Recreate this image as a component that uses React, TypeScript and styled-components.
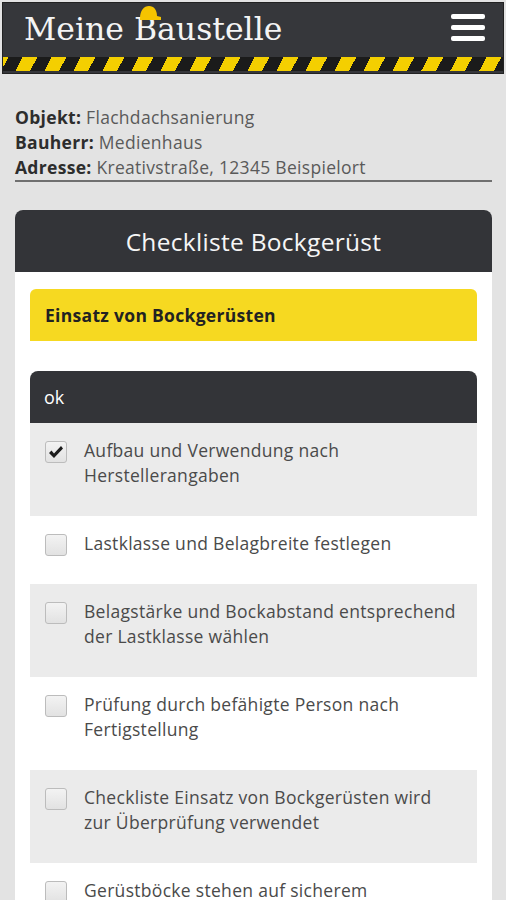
import React from 'react';
import styled, { createGlobalStyle } from 'styled-components';

const GlobalStyle = createGlobalStyle`
  body {
    margin: 0;
    background: #e3e3e3;
    font-family: 'Open Sans', 'Liberation Sans', sans-serif;
  }
`;

const Page = styled.div`
  width: 506px;
  min-height: 900px;
  overflow: hidden;
`;

const Header = styled.header`
  margin: 2px 2px 0;
  height: 72px;
  background: #36373b;
  border: 1px solid #222;
  box-sizing: border-box;
  display: flex;
  flex-direction: column;
`;

const HeaderBar = styled.div`
  flex: 1;
  display: flex;
  align-items: center;
  justify-content: space-between;
  padding: 0 18px 0 21px;
`;

const Logo = styled.div`
  position: relative;
  font-family: 'DejaVu Serif', 'Liberation Serif', serif;
  font-size: 31.5px;
  color: #f4f4f4;
  margin-top: -3px;
`;

const Hat = styled.svg`
  position: absolute;
  left: 114px;
  top: -7px;
`;

const Burger = styled.button`
  border: none;
  background: transparent;
  padding: 0;
  width: 34px;
  display: flex;
  flex-direction: column;
  gap: 6px;
  margin-top: -6px;
  cursor: pointer;
`;

const BurgerLine = styled.span`
  display: block;
  height: 5px;
  border-radius: 2px;
  background: #fff;
`;

const Stripe = styled.div`
  height: 14px;
  margin-bottom: 2px;
  background: repeating-linear-gradient(
    -62deg,
    #1b1b1b 0 8px,
    #f4cf00 8px 21px,
    #1b1b1b 21px 25.6px
  );
`;

const Info = styled.section`
  margin: 31px 14px 0 15px;
  border-bottom: 2px solid #707070;
  font-size: 17.5px;
  line-height: 25px;
  letter-spacing: 0.3px;
  color: #5a5a5a;
`;

const InfoRow = styled.div``;

const Label = styled.b`
  font-weight: 700;
  color: #2d2d2d;
`;

const Card = styled.section`
  margin: 28px 14px 0 15px;
  background: #fff;
  border-radius: 8px 8px 0 0;
`;

const CardTitle = styled.h1`
  margin: 0;
  height: 62px;
  display: flex;
  align-items: center;
  justify-content: center;
  background: #333438;
  border-radius: 8px 8px 0 0;
  color: #f6f6f6;
  font-weight: 400;
  font-size: 24.5px;
  letter-spacing: 0.3px;
`;

const CardBody = styled.div`
  padding: 17px 15px 0;
`;

const Section = styled.div`
  height: 52px;
  display: flex;
  align-items: center;
  padding: 0 15px;
  background: #f6d921;
  border-radius: 6px 6px 0 0;
  font-weight: 700;
  font-size: 17.5px;
  letter-spacing: 0.3px;
  color: #222;
`;

const Group = styled.div`
  margin-top: 30px;
`;

const GroupHead = styled.div`
  height: 52px;
  display: flex;
  align-items: center;
  padding: 0 14px;
  background: #333438;
  border-radius: 8px 8px 0 0;
  color: #fff;
  font-size: 18px;
`;

const Item = styled.label<{ $shaded: boolean }>`
  display: flex;
  align-items: flex-start;
  gap: 17px;
  padding: 15px 14px 28px 15px;
  background: ${(p) => (p.$shaded ? '#ebebeb' : '#fff')};
  font-size: 17.5px;
  line-height: 25px;
  letter-spacing: 0.3px;
  color: #4a4a4a;
`;

const Box = styled.span`
  flex: none;
  width: 20px;
  height: 20px;
  margin-top: 3px;
  border: 1px solid #bcbcbc;
  border-radius: 3px;
  background: linear-gradient(#f3f3f3, #e2e2e2);
  display: flex;
  align-items: center;
  justify-content: center;
`;

const items = [
  { text: 'Aufbau und Verwendung nach Herstellerangaben', checked: true },
  { text: 'Lastklasse und Belagbreite festlegen', checked: false },
  { text: 'Belagstärke und Bockabstand entsprechend der Lastklasse wählen', checked: false },
  { text: 'Prüfung durch befähigte Person nach Fertigstellung', checked: false },
  { text: 'Checkliste Einsatz von Bockgerüsten wird zur Überprüfung verwendet', checked: false },
  { text: 'Gerüstböcke stehen auf sicherem Untergrund', checked: false },
];

const Check = () => (
  <svg width="16" height="14" viewBox="0 0 16 14">
    <path d="M1 8 L3.5 5.5 L6 8.5 L13 1 L15 3.5 L6 13 Z" fill="#1c1c1c" />
  </svg>
);

const App = () => (
  <Page>
    <GlobalStyle />
    <Header>
      <HeaderBar>
        <Logo>
          Meine Baustelle
          <Hat width="24" height="18" viewBox="0 0 24 18">
            <path d="M2 15 C2 6 6 2 11 2 C16 2 19 6 19 12 L23 13 L23 16 L2 16 Z" fill="#f5c400" />
          </Hat>
        </Logo>
        <Burger aria-label="Menü">
          <BurgerLine />
          <BurgerLine />
          <BurgerLine />
        </Burger>
      </HeaderBar>
      <Stripe />
    </Header>

    <Info>
      <InfoRow>
        <Label>Objekt:</Label> Flachdachsanierung
      </InfoRow>
      <InfoRow>
        <Label>Bauherr:</Label> Medienhaus
      </InfoRow>
      <InfoRow>
        <Label>Adresse:</Label> Kreativstraße, 12345 Beispielort
      </InfoRow>
    </Info>

    <Card>
      <CardTitle>Checkliste Bockgerüst</CardTitle>
      <CardBody>
        <Section>Einsatz von Bockgerüsten</Section>
        <Group>
          <GroupHead>ok</GroupHead>
          {items.map((it, i) => (
            <Item key={it.text} $shaded={i % 2 === 0}>
              <Box>{it.checked && <Check />}</Box>
              <span>{it.text}</span>
            </Item>
          ))}
        </Group>
      </CardBody>
    </Card>
  </Page>
);

export default App;
